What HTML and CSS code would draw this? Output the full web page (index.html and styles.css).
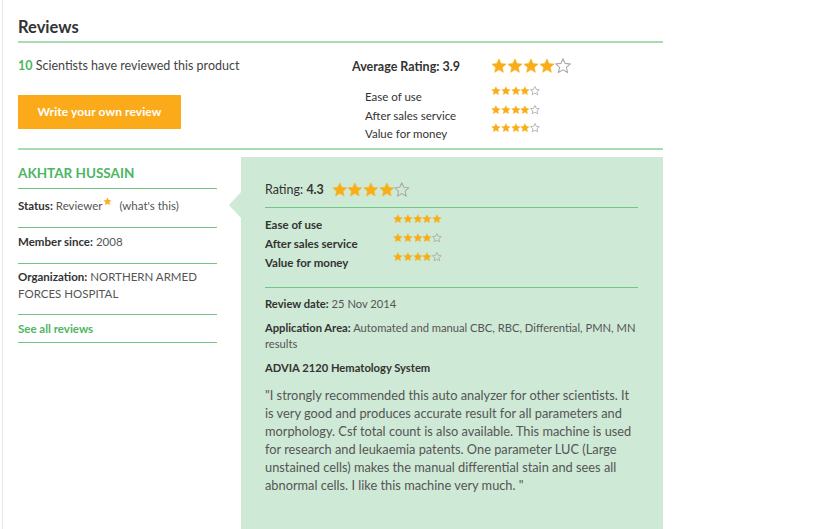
FILE: index.html
```html
<!DOCTYPE html>
<html>
<head>
<meta charset="utf-8">
<link rel="stylesheet" href="styles.css">
</head>
<body>
<svg class="defs" width="0" height="0" aria-hidden="true">
  <defs>
    <symbol id="star" viewBox="0 0 24 24">
      <polygon points="12,1.2 15.2,8.1 22.8,9 17.1,14.1 18.7,21.6 12,17.8 5.3,21.6 6.9,14.1 1.2,9 8.8,8.1"/>
    </symbol>
  </defs>
</svg>
<div class="page">
  <h2 class="title">Reviews</h2>
  <div class="summary">
    <div class="summary-left">
      <p class="count"><span class="num">10</span> Scientists have reviewed this product</p>
      <a class="btn">Write your own review</a>
    </div>
    <div class="summary-right">
      <div class="avg-row">
        <span class="avg-label">Average Rating: 3.9</span>
        <span class="stars big"><svg><use href="#star"/></svg><svg><use href="#star"/></svg><svg><use href="#star"/></svg><svg><use href="#star"/></svg><svg class="empty"><use href="#star"/></svg></span>
      </div>
      <div class="sub-row"><span class="sub-label">Ease of use</span><span class="stars small"><svg><use href="#star"/></svg><svg><use href="#star"/></svg><svg><use href="#star"/></svg><svg><use href="#star"/></svg><svg class="empty"><use href="#star"/></svg></span></div>
      <div class="sub-row"><span class="sub-label">After sales service</span><span class="stars small"><svg><use href="#star"/></svg><svg><use href="#star"/></svg><svg><use href="#star"/></svg><svg><use href="#star"/></svg><svg class="empty"><use href="#star"/></svg></span></div>
      <div class="sub-row"><span class="sub-label">Value for money</span><span class="stars small"><svg><use href="#star"/></svg><svg><use href="#star"/></svg><svg><use href="#star"/></svg><svg><use href="#star"/></svg><svg class="empty"><use href="#star"/></svg></span></div>
    </div>
  </div>
  <div class="review">
    <div class="reviewer">
      <div class="name">AKHTAR HUSSAIN</div>
      <div class="info status"><b>Status:</b> Reviewer<svg class="ystar"><use href="#star"/></svg> (what's this)</div>
      <div class="info"><b>Member since:</b> 2008</div>
      <div class="info org"><b>Organization:</b> NORTHERN ARMED FORCES HOSPITAL</div>
      <div class="info link">See all reviews</div>
    </div>
    <div class="panel">
      <div class="rating-row"><span>Rating: <b>4.3</b></span><span class="stars mid"><svg><use href="#star"/></svg><svg><use href="#star"/></svg><svg><use href="#star"/></svg><svg><use href="#star"/></svg><svg class="empty"><use href="#star"/></svg></span></div>
      <div class="panel-subs">
        <div class="psub"><span class="psub-label">Ease of use</span><span class="stars small"><svg><use href="#star"/></svg><svg><use href="#star"/></svg><svg><use href="#star"/></svg><svg><use href="#star"/></svg><svg><use href="#star"/></svg></span></div>
        <div class="psub"><span class="psub-label">After sales service</span><span class="stars small"><svg><use href="#star"/></svg><svg><use href="#star"/></svg><svg><use href="#star"/></svg><svg><use href="#star"/></svg><svg class="empty"><use href="#star"/></svg></span></div>
        <div class="psub"><span class="psub-label">Value for money</span><span class="stars small"><svg><use href="#star"/></svg><svg><use href="#star"/></svg><svg><use href="#star"/></svg><svg><use href="#star"/></svg><svg class="empty"><use href="#star"/></svg></span></div>
      </div>
      <p class="meta"><b>Review date:</b> 25 Nov 2014</p>
      <p class="meta"><b>Application Area:</b> Automated and manual CBC, RBC, Differential, PMN, MN results</p>
      <p class="meta product">ADVIA 2120 Hematology System</p>
      <p class="quote">"I strongly recommended this auto analyzer for other scientists. It is very good and produces accurate result for all parameters and morphology. Csf total count is also available. This machine is used for research and leukaemia patents. One parameter LUC (Large unstained cells) makes the manual differential stain and sees all abnormal cells. I like this machine very much. "</p>
    </div>
  </div>
</div>
</body>
</html>
```

FILE: styles.css
```css
html, body {
  margin: 0;
  padding: 0;
  background: #fff;
  height: 100%;
}
body {
  font-family: Lato, "Open Sans", "Liberation Sans", sans-serif;
  color: #444;
  font-size: 12px;
}
.defs {
  position: absolute;
  width: 0;
  height: 0;
}
.page {
  margin-left: 2px;
  border-left: 1px solid #e6e6e6;
  padding-left: 15px;
  width: 645px;
  min-height: 529px;
  box-sizing: content-box;
}
.title {
  margin: 0;
  padding-top: 17px;
  font-size: 16.5px;
  font-weight: 700;
  color: #333;
  line-height: 20px;
  padding-bottom: 4px;
  border-bottom: 2px solid #a6dcb3;
}
.summary {
  display: flex;
  border-bottom: 2px solid #a6dcb3;
  padding-bottom: 8px;
}
.summary-left {
  width: 334px;
}
.count {
  margin: 15px 0 0;
  line-height: 16px;
  font-size: 12.5px;
}
.num {
  color: #4cb662;
  font-weight: 700;
}
.btn {
  display: block;
  margin-top: 21px;
  width: 163px;
  height: 34px;
  line-height: 34px;
  background: #fbab19;
  color: #fff;
  font-weight: 700;
  font-size: 12px;
  text-align: center;
  letter-spacing: 0.1px;
}
.summary-right {
  padding-top: 12px;
}
.avg-row {
  display: flex;
  align-items: center;
  height: 22px;
}
.avg-label {
  width: 139px;
  font-weight: 700;
  font-size: 12.5px;
  color: #333;
}
.stars {
  display: inline-flex;
  align-items: center;
}
.stars svg {
  fill: #f9ae17;
  stroke: #f9ae17;
  stroke-width: 0.6;
  flex: none;
}
.stars svg.empty {
  fill: none;
  stroke: #a9a9a9;
  stroke-width: 1.6;
}
.big svg {
  width: 16px;
  height: 16px;
}
.mid {
  margin-left: 8px;
}
.mid svg {
  width: 15.6px;
  height: 15.6px;
}
.small svg {
  width: 9.8px;
  height: 9.8px;
}
.small svg.empty {
  stroke-width: 2;
}
.sub-row {
  display: flex;
  height: 18.5px;
  padding-left: 13px;
}
.avg-row + .sub-row {
  margin-top: 7px;
}
.sub-label {
  width: 126px;
  line-height: 26px;
  font-size: 11.5px;
  color: #333;
}
.sub-row .stars,
.psub .stars {
  height: 14px;
  align-self: flex-start;
}
.review {
  display: flex;
  align-items: flex-start;
  margin-top: 6px;
  gap: 24px;
}
.reviewer {
  width: 199px;
  flex: none;
}
.name {
  color: #4cb662;
  font-weight: 700;
  font-size: 13.5px;
  line-height: 18px;
  padding-top: 8px;
  padding-bottom: 6px;
  border-bottom: 1px solid #72c487;
}
.info {
  font-size: 11.5px;
  line-height: 17px;
  padding: 5px 0 13px;
  border-bottom: 1px solid #72c487;
  color: #555;
}
.info.status {
  padding-top: 8px;
  padding-bottom: 13px;
}
.info.org {
  padding-top: 4px;
  padding-bottom: 12px;
}
.info b {
  color: #333;
  font-weight: 700;
}
.info.link {
  color: #4cb662;
  font-weight: 700;
  padding: 5px 0 5px;
}
.ystar {
  width: 9px;
  height: 9px;
  fill: #f9b01b;
  vertical-align: top;
  margin-right: 5px;
}
.panel {
  flex: 1;
  background: #cee9d5;
  padding: 22px 25px 30px 24px;
  position: relative;
  box-sizing: border-box;
  height: 374px;
  margin-top: 1px;
}
.panel::before {
  content: "";
  position: absolute;
  left: -12px;
  top: 35px;
  border-right: 12px solid #cee9d5;
  border-top: 13px solid transparent;
  border-bottom: 13px solid transparent;
}
.rating-row {
  display: flex;
  align-items: center;
  font-size: 12.5px;
  color: #333;
  padding-bottom: 6px;
  border-bottom: 1px solid #72c487;
  height: 22px;
}
.rating-row b {
  font-weight: 700;
}
.panel-subs {
  padding-top: 4px;
  padding-bottom: 18px;
  border-bottom: 1px solid #72c487;
}
.psub {
  display: flex;
  height: 19px;
}
.psub-label {
  width: 128px;
  font-weight: 700;
  font-size: 11.5px;
  color: #333;
  line-height: 26px;
}
.meta {
  margin: 8px 0 0;
  font-size: 11.2px;
  line-height: 16px;
  color: #555;
}
.meta b {
  color: #333;
}
.meta.product {
  font-weight: 700;
  color: #333;
  margin-top: 8px;
}
.quote {
  margin: 10px 0 0;
  font-size: 12.8px;
  line-height: 18px;
  color: #555;
}
```
